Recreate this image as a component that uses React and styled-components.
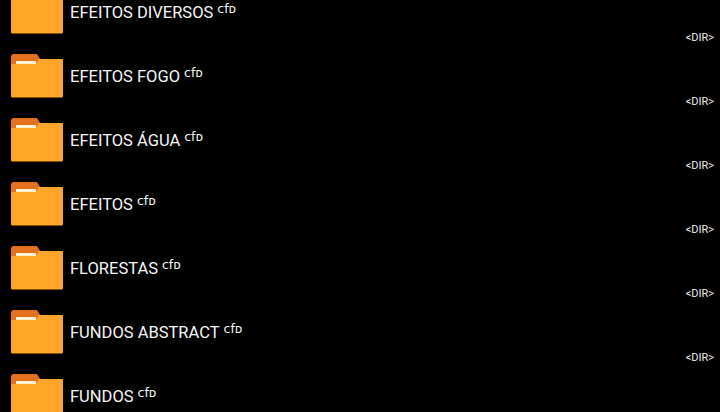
import React from 'react'
import styled, { createGlobalStyle } from 'styled-components'

const GlobalStyle = createGlobalStyle`
  html, body { margin: 0; padding: 0; background: #000; overflow: hidden; }
  body { font-family: Roboto, "Liberation Sans", sans-serif; }
`

const FileList = styled.div`
  width: 720px;
  height: 412px;
  overflow: hidden;
  background: #000;
`

// list is scrolled a little, first row is cut by the top edge
const ScrollContent = styled.div`
  margin-top: -20px;
`

const Row = styled.div`
  height: 64px;
  box-sizing: border-box;
  padding: 10px 6px 0 11px;
  display: flex;
  align-items: flex-start;
`

const Name = styled.div`
  margin-left: 7px;
  margin-top: 13px;
  color: #f6f6f6;
  font-size: 16.5px;
  line-height: 20px;
  white-space: nowrap;
`

const Tag = styled.sup`
  margin-left: 4px;
  font-size: 12.5px;
  font-weight: 400;
  line-height: 0;
  vertical-align: 5px;
  font-family: "DejaVu Sans", Roboto, sans-serif;
`

const Size = styled.div`
  margin-left: auto;
  margin-top: 41px;
  color: #ececec;
  font-size: 11px;
  line-height: 14px;
`

const FolderIcon = () => (
  <svg width="52" height="44" viewBox="0 0 52 44">
    <path d="M0 3a3 3 0 0 1 3-3h23l3 5H52v10H0z" fill="#e3701d" />
    <path d="M0 10h25l3-5h22a2 2 0 0 1 2 2v35a1.500 1.500 0 0 1-1.500 1.500H1.500A1.500 1.500 0 0 1 0 42z" fill="#ffa629" />
    <rect x="5" y="7" width="20" height="3" fill="#fff0d6" />
  </svg>
)

const folders = [
  'EFEITOS DIVERSOS',
  'EFEITOS FOGO',
  'EFEITOS ÁGUA',
  'EFEITOS',
  'FLORESTAS',
  'FUNDOS ABSTRACT',
  'FUNDOS',
]

const App = () => (
  <FileList>
    <GlobalStyle />
    <ScrollContent>
      {folders.map(name => (
        <Row key={name}>
          <FolderIcon />
          <Name>{name}<Tag>cfᴅ</Tag></Name>
          <Size>&lt;DIR&gt;</Size>
        </Row>
      ))}
    </ScrollContent>
  </FileList>
)

export default App
